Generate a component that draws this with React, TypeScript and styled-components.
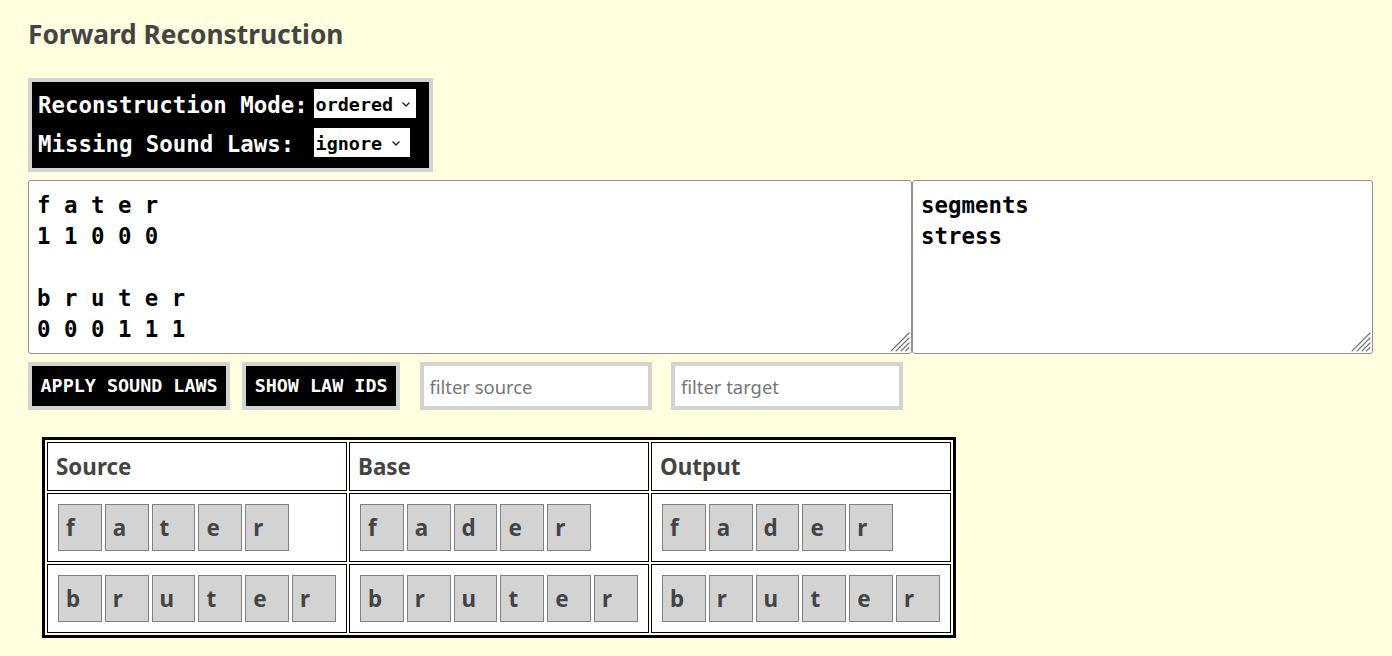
import React from "react";
import styled, { createGlobalStyle } from "styled-components";

const GlobalStyle = createGlobalStyle`
  *, *::before, *::after { box-sizing: border-box; }
  html, body {
    margin: 0;
    padding: 0;
    background: lightyellow;
  }
  body {
    font-family: "Noto Sans", sans-serif;
    color: #444;
  }
`;

const Page = styled.div`
  padding: 16px 0 0 28px;
`;

const Title = styled.h2`
  margin: 0 0 25px;
  font-size: 26.3px;
  line-height: 37px;
  font-weight: 700;
  color: #444;
`;

const ModeBox = styled.div`
  display: grid;
  width: fit-content;
  grid-template-columns: auto auto;
  column-gap: 6px;
  row-gap: 10px;
  align-items: center;
  padding: 7px 13px 11px 6px;
  background: black;
  border: 4px solid lightgray;
  color: white;
  font-family: "DejaVu Sans Mono", monospace;
  font-weight: 700;
  font-size: 22.4px;
`;

const ModeLabel = styled.label`
  white-space: pre;
  line-height: 26px;
  padding-top: 2px;
`;

const SelectWrap = styled.span`
  position: relative;
  display: block;
  justify-self: start;
`;

const ModeSelect = styled.select<{ $w: number }>`
  display: block;
  width: ${(p) => p.$w}px;
  height: 29px;
  padding: 1px 0 0 2px;
  background: white;
  color: black;
  border: none;
  border-radius: 0;
  appearance: none;
  -webkit-appearance: none;
  font-family: "DejaVu Sans Mono", monospace;
  font-weight: 700;
  font-size: 18.4px;
  outline: none;
`;

const Chevron = styled.svg<{ $right: number }>`
  position: absolute;
  top: 12px;
  right: ${(p) => p.$right}px;
  width: 10px;
  height: 7px;
  pointer-events: none;
`;

const EditorRow = styled.div`
  display: flex;
  margin-top: 8px;
`;

const EditorFrame = styled.div`
  position: relative;
  display: flex;
`;

const Editor = styled.textarea<{ $w: number }>`
  width: ${(p) => p.$w}px;
  height: 174px;
  margin: 0;
  padding: 9px 8px 8px;
  background: white;
  color: black;
  border: 1px solid #8f8f9d;
  border-radius: 3px;
  font-family: "DejaVu Sans Mono", monospace;
  font-weight: 700;
  font-size: 22.4px;
  line-height: 31px;
  resize: none;
  outline: none;
`;

const Grip = styled.svg`
  position: absolute;
  right: 2px;
  bottom: 2px;
  width: 21px;
  height: 21px;
  pointer-events: none;
`;

const ControlRow = styled.div`
  display: flex;
  align-items: center;
  gap: 12px;
  margin-top: 8px;
`;

const ActionButton = styled.button`
  height: 48px;
  padding: 9px 8.5px;
  background: black;
  color: white;
  border: 4px solid lightgray;
  border-radius: 0;
  font-family: "DejaVu Sans Mono", monospace;
  font-weight: 700;
  font-size: 18.4px;
  line-height: 22px;
  cursor: pointer;
`;

const FilterInput = styled.input`
  width: 232px;
  height: 48px;
  margin-left: 7.5px;
  padding: 0 6px;
  background: white;
  border: 4px solid lightgray;
  border-radius: 0;
  font-family: "Noto Sans", sans-serif;
  font-size: 18.4px;
  color: #222;
  outline: none;
  &::placeholder {
    color: #757575;
  }
`;

const Results = styled.table`
  margin: 27px 0 0 14px;
  border: 3px solid black;
  border-spacing: 2px;
  table-layout: fixed;
`;

const HeadCell = styled.th`
  width: 300px;
  padding: 8px;
  background: white;
  border: 1px solid black;
  text-align: left;
  font-size: 22.4px;
  line-height: normal;
  font-weight: 700;
  color: #444;
`;

const Cell = styled.td`
  width: 300px;
  padding: 8px;
  background: white;
  border: 1px solid black;
  vertical-align: top;
`;

const SegRow = styled.div`
  display: flex;
  gap: 3px;
  padding: 2px 0 2px 2px;
`;

const Seg = styled.span`
  display: block;
  width: 43.8px;
  padding: 7px;
  background: lightgray;
  border: 1px solid gray;
  font-size: 22.4px;
  line-height: normal;
  font-weight: 700;
  color: #444;
`;

const rows: string[][][] = [
  [
    ["f", "a", "t", "e", "r"],
    ["f", "a", "d", "e", "r"],
    ["f", "a", "d", "e", "r"],
  ],
  [
    ["b", "r", "u", "t", "e", "r"],
    ["b", "r", "u", "t", "e", "r"],
    ["b", "r", "u", "t", "e", "r"],
  ],
];

const ChevronIcon = ({ right }: { right: number }) => (
  <Chevron $right={right} viewBox="0 0 10 7">
    <path d="M1.5 1.5 L5 5 L8.5 1.5" fill="none" stroke="#222" strokeWidth="1.3" />
  </Chevron>
);

const GripIcon = () => (
  <Grip viewBox="0 0 21 21">
    <g stroke="#6f6f6f" strokeWidth="1.1" strokeLinecap="round">
      <line x1="2" y1="20" x2="20" y2="2" />
      <line x1="7" y1="20" x2="20" y2="7" />
      <line x1="12" y1="20" x2="20" y2="12" />
      <line x1="16.5" y1="20" x2="20" y2="16.5" />
    </g>
  </Grip>
);

export default function App() {
  return (
    <>
      <GlobalStyle />
      <Page>
        <Title>Forward Reconstruction</Title>
        <ModeBox>
          <ModeLabel>Reconstruction Mode:</ModeLabel>
          <SelectWrap>
            <ModeSelect $w={102} defaultValue="ordered">
              <option value="ordered">ordered</option>
              <option value="free">free</option>
            </ModeSelect>
            <ChevronIcon right={5} />
          </SelectWrap>
          <ModeLabel>Missing Sound Laws:</ModeLabel>
          <SelectWrap>
            <ModeSelect $w={96} defaultValue="ignore">
              <option value="ignore">ignore</option>
              <option value="stop">stop</option>
            </ModeSelect>
            <ChevronIcon right={9} />
          </SelectWrap>
        </ModeBox>
        <EditorRow>
          <EditorFrame>
            <Editor
              $w={884}
              spellCheck={false}
              defaultValue={"f a t e r\n1 1 0 0 0\n\nb r u t e r\n0 0 0 1 1 1"}
            />
            <GripIcon />
          </EditorFrame>
          <EditorFrame>
            <Editor $w={461} spellCheck={false} defaultValue={"segments\nstress"} />
            <GripIcon />
          </EditorFrame>
        </EditorRow>
        <ControlRow>
          <ActionButton>APPLY SOUND LAWS</ActionButton>
          <ActionButton>SHOW LAW IDS</ActionButton>
          <FilterInput placeholder="filter source" />
          <FilterInput placeholder="filter target" />
        </ControlRow>
        <Results>
          <thead>
            <tr>
              <HeadCell>Source</HeadCell>
              <HeadCell>Base</HeadCell>
              <HeadCell>Output</HeadCell>
            </tr>
          </thead>
          <tbody>
            {rows.map((row, i) => (
              <tr key={i}>
                {row.map((segs, j) => (
                  <Cell key={j}>
                    <SegRow>
                      {segs.map((s, k) => (
                        <Seg key={k}>{s}</Seg>
                      ))}
                    </SegRow>
                  </Cell>
                ))}
              </tr>
            ))}
          </tbody>
        </Results>
      </Page>
    </>
  );
}
